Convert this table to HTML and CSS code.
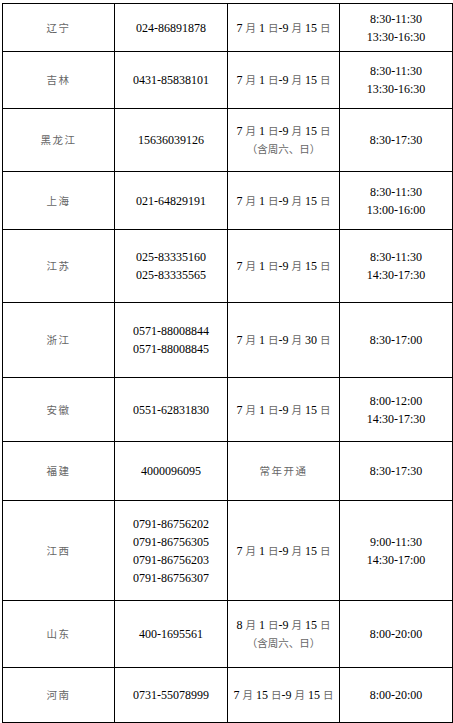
FILE: index.html
```html
<!DOCTYPE html>
<html lang="zh-CN">
<head>
<meta charset="utf-8">
<title>咨询电话</title>
<link rel="stylesheet" href="styles.css">
</head>
<body>
<div class="page">
  <div class="grid">
    <div class="cell zh">辽宁</div>
    <div class="cell">024-86891878</div>
    <div class="cell"><div>7 <span class="c">月</span> 1 <span class="c">日</span>-9 <span class="c">月</span> 15 <span class="c">日</span></div></div>
    <div class="cell"><div>8:30-11:30</div><div>13:30-16:30</div></div>

    <div class="cell zh">吉林</div>
    <div class="cell">0431-85838101</div>
    <div class="cell"><div>7 <span class="c">月</span> 1 <span class="c">日</span>-9 <span class="c">月</span> 15 <span class="c">日</span></div></div>
    <div class="cell"><div>8:30-11:30</div><div>13:30-16:30</div></div>

    <div class="cell zh">黑龙江</div>
    <div class="cell">15636039126</div>
    <div class="cell"><div>7 <span class="c">月</span> 1 <span class="c">日</span>-9 <span class="c">月</span> 15 <span class="c">日</span></div><div class="note">（含周六、日）</div></div>
    <div class="cell">8:30-17:30</div>

    <div class="cell zh">上海</div>
    <div class="cell">021-64829191</div>
    <div class="cell"><div>7 <span class="c">月</span> 1 <span class="c">日</span>-9 <span class="c">月</span> 15 <span class="c">日</span></div></div>
    <div class="cell"><div>8:30-11:30</div><div>13:00-16:00</div></div>

    <div class="cell zh">江苏</div>
    <div class="cell"><div>025-83335160</div><div>025-83335565</div></div>
    <div class="cell"><div>7 <span class="c">月</span> 1 <span class="c">日</span>-9 <span class="c">月</span> 15 <span class="c">日</span></div></div>
    <div class="cell"><div>8:30-11:30</div><div>14:30-17:30</div></div>

    <div class="cell zh">浙江</div>
    <div class="cell"><div>0571-88008844</div><div>0571-88008845</div></div>
    <div class="cell"><div>7 <span class="c">月</span> 1 <span class="c">日</span>-9 <span class="c">月</span> 30 <span class="c">日</span></div></div>
    <div class="cell">8:30-17:00</div>

    <div class="cell zh">安徽</div>
    <div class="cell">0551-62831830</div>
    <div class="cell"><div>7 <span class="c">月</span> 1 <span class="c">日</span>-9 <span class="c">月</span> 15 <span class="c">日</span></div></div>
    <div class="cell"><div>8:00-12:00</div><div>14:30-17:30</div></div>

    <div class="cell zh">福建</div>
    <div class="cell">4000096095</div>
    <div class="cell zh">常年开通</div>
    <div class="cell">8:30-17:30</div>

    <div class="cell zh">江西</div>
    <div class="cell"><div>0791-86756202</div><div>0791-86756305</div><div>0791-86756203</div><div>0791-86756307</div></div>
    <div class="cell"><div>7 <span class="c">月</span> 1 <span class="c">日</span>-9 <span class="c">月</span> 15 <span class="c">日</span></div></div>
    <div class="cell"><div>9:00-11:30</div><div>14:30-17:00</div></div>

    <div class="cell zh">山东</div>
    <div class="cell">400-1695561</div>
    <div class="cell"><div>8 <span class="c">月</span> 1 <span class="c">日</span>-9 <span class="c">月</span> 15 <span class="c">日</span></div><div class="note">（含周六、日）</div></div>
    <div class="cell">8:00-20:00</div>

    <div class="cell zh">河南</div>
    <div class="cell">0731-55078999</div>
    <div class="cell"><div>7 <span class="c">月</span> 15 <span class="c">日</span>-9 <span class="c">月</span> 15 <span class="c">日</span></div></div>
    <div class="cell">8:00-20:00</div>
  </div>
</div>
</body>
</html>
```

FILE: styles.css
```css
html, body {
  margin: 0;
  padding: 0;
  background: #ffffff;
}

.page {
  padding: 3px 0 0 2px;
}

.grid {
  display: grid;
  width: 451px;
  box-sizing: border-box;
  grid-template-columns: 111px 112px 111px 112px;
  grid-template-rows: 47px 56px 62px 57px 72px 74px 63px 58px 99px 66px 54px;
  gap: 1px;
  padding: 1px;
  background: #000000;
}

.cell {
  background: #ffffff;
  display: flex;
  flex-direction: column;
  align-items: center;
  justify-content: center;
  text-align: center;
  font-family: "Liberation Serif", "Noto Sans CJK SC", serif;
  font-size: 12px;
  line-height: 18px;
  color: #000000;
  white-space: nowrap;
}

.c {
  font-family: "Noto Sans CJK SC", sans-serif;
  font-size: 10.5px;
  color: #666666;
}

.zh {
  font-family: "Noto Sans CJK SC", sans-serif;
  font-size: 10.5px;
  letter-spacing: 1.5px;
  color: #666666;
}

.note {
  font-family: "Noto Sans CJK SC", sans-serif;
  font-size: 10.5px;
  color: #666666;
}
```
